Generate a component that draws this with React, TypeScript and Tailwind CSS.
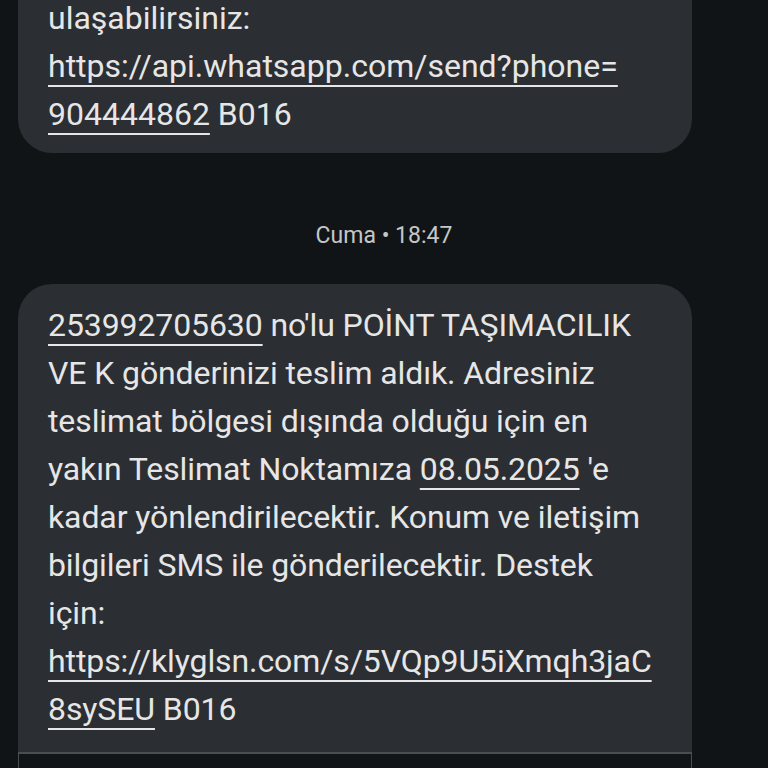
import React from "react";

const font = { fontFamily: "Roboto, 'Noto Sans', sans-serif" };

function Link({ children }: { children: React.ReactNode }) {
  return (
    <span className="underline decoration-2 underline-offset-[8px]">
      {children}
    </span>
  );
}

export default function App() {
  const first: React.ReactNode[] = [
    "ulaşabilirsiniz:",
    <Link key="a">https://api.whatsapp.com/send?phone=</Link>,
    <>
      <Link>904444862</Link> B016
    </>,
  ];

  const second: React.ReactNode[] = [
    <>
      <Link>253992705630</Link> no'lu POİNT TAŞIMACILIK
    </>,
    "VE K gönderinizi teslim aldık. Adresiniz",
    "teslimat bölgesi dışında olduğu için en",
    <>
      yakın Teslimat Noktamıza <Link>08.05.2025</Link> 'e
    </>,
    "kadar yönlendirilecektir. Konum ve iletişim",
    "bilgileri SMS ile gönderilecektir. Destek",
    "için:",
    <Link key="b">https://klyglsn.com/s/5VQp9U5iXmqh3jaC</Link>,
    <>
      <Link>8sySEU</Link> B016
    </>,
  ];

  return (
    <div
      className="h-[768px] w-[768px] overflow-hidden bg-[#111417] text-[#e6e6e6]"
      style={font}
    >
      <div className="ml-[18px] mt-[-23px] w-[674px] rounded-b-[34px] bg-[#2b2e32] px-[30px] pb-[15px] pt-[17px]">
        {first.map((l, i) => (
          <div key={i} className="whitespace-nowrap text-[32px] leading-[48px]">
            {l}
          </div>
        ))}
      </div>

      <div className="h-[131px] pt-[69px] text-center text-[23px] leading-[28px] text-[#c4c7c5]">
        Cuma • 18:47
      </div>

      <div className="ml-[18px] w-[674px] overflow-hidden rounded-t-[34px] bg-[#2b2e32]">
        <div className="px-[30px] pb-[19px] pt-[17px] tracking-[-0.1px]">
          {second.map((l, i) => (
            <div
              key={i}
              className="whitespace-nowrap text-[32px] leading-[48px]"
            >
              {l}
            </div>
          ))}
        </div>
        <div className="h-[60px] border-x border-t-2 border-[#4a4d52] bg-[#121518]" />
      </div>
    </div>
  );
}
